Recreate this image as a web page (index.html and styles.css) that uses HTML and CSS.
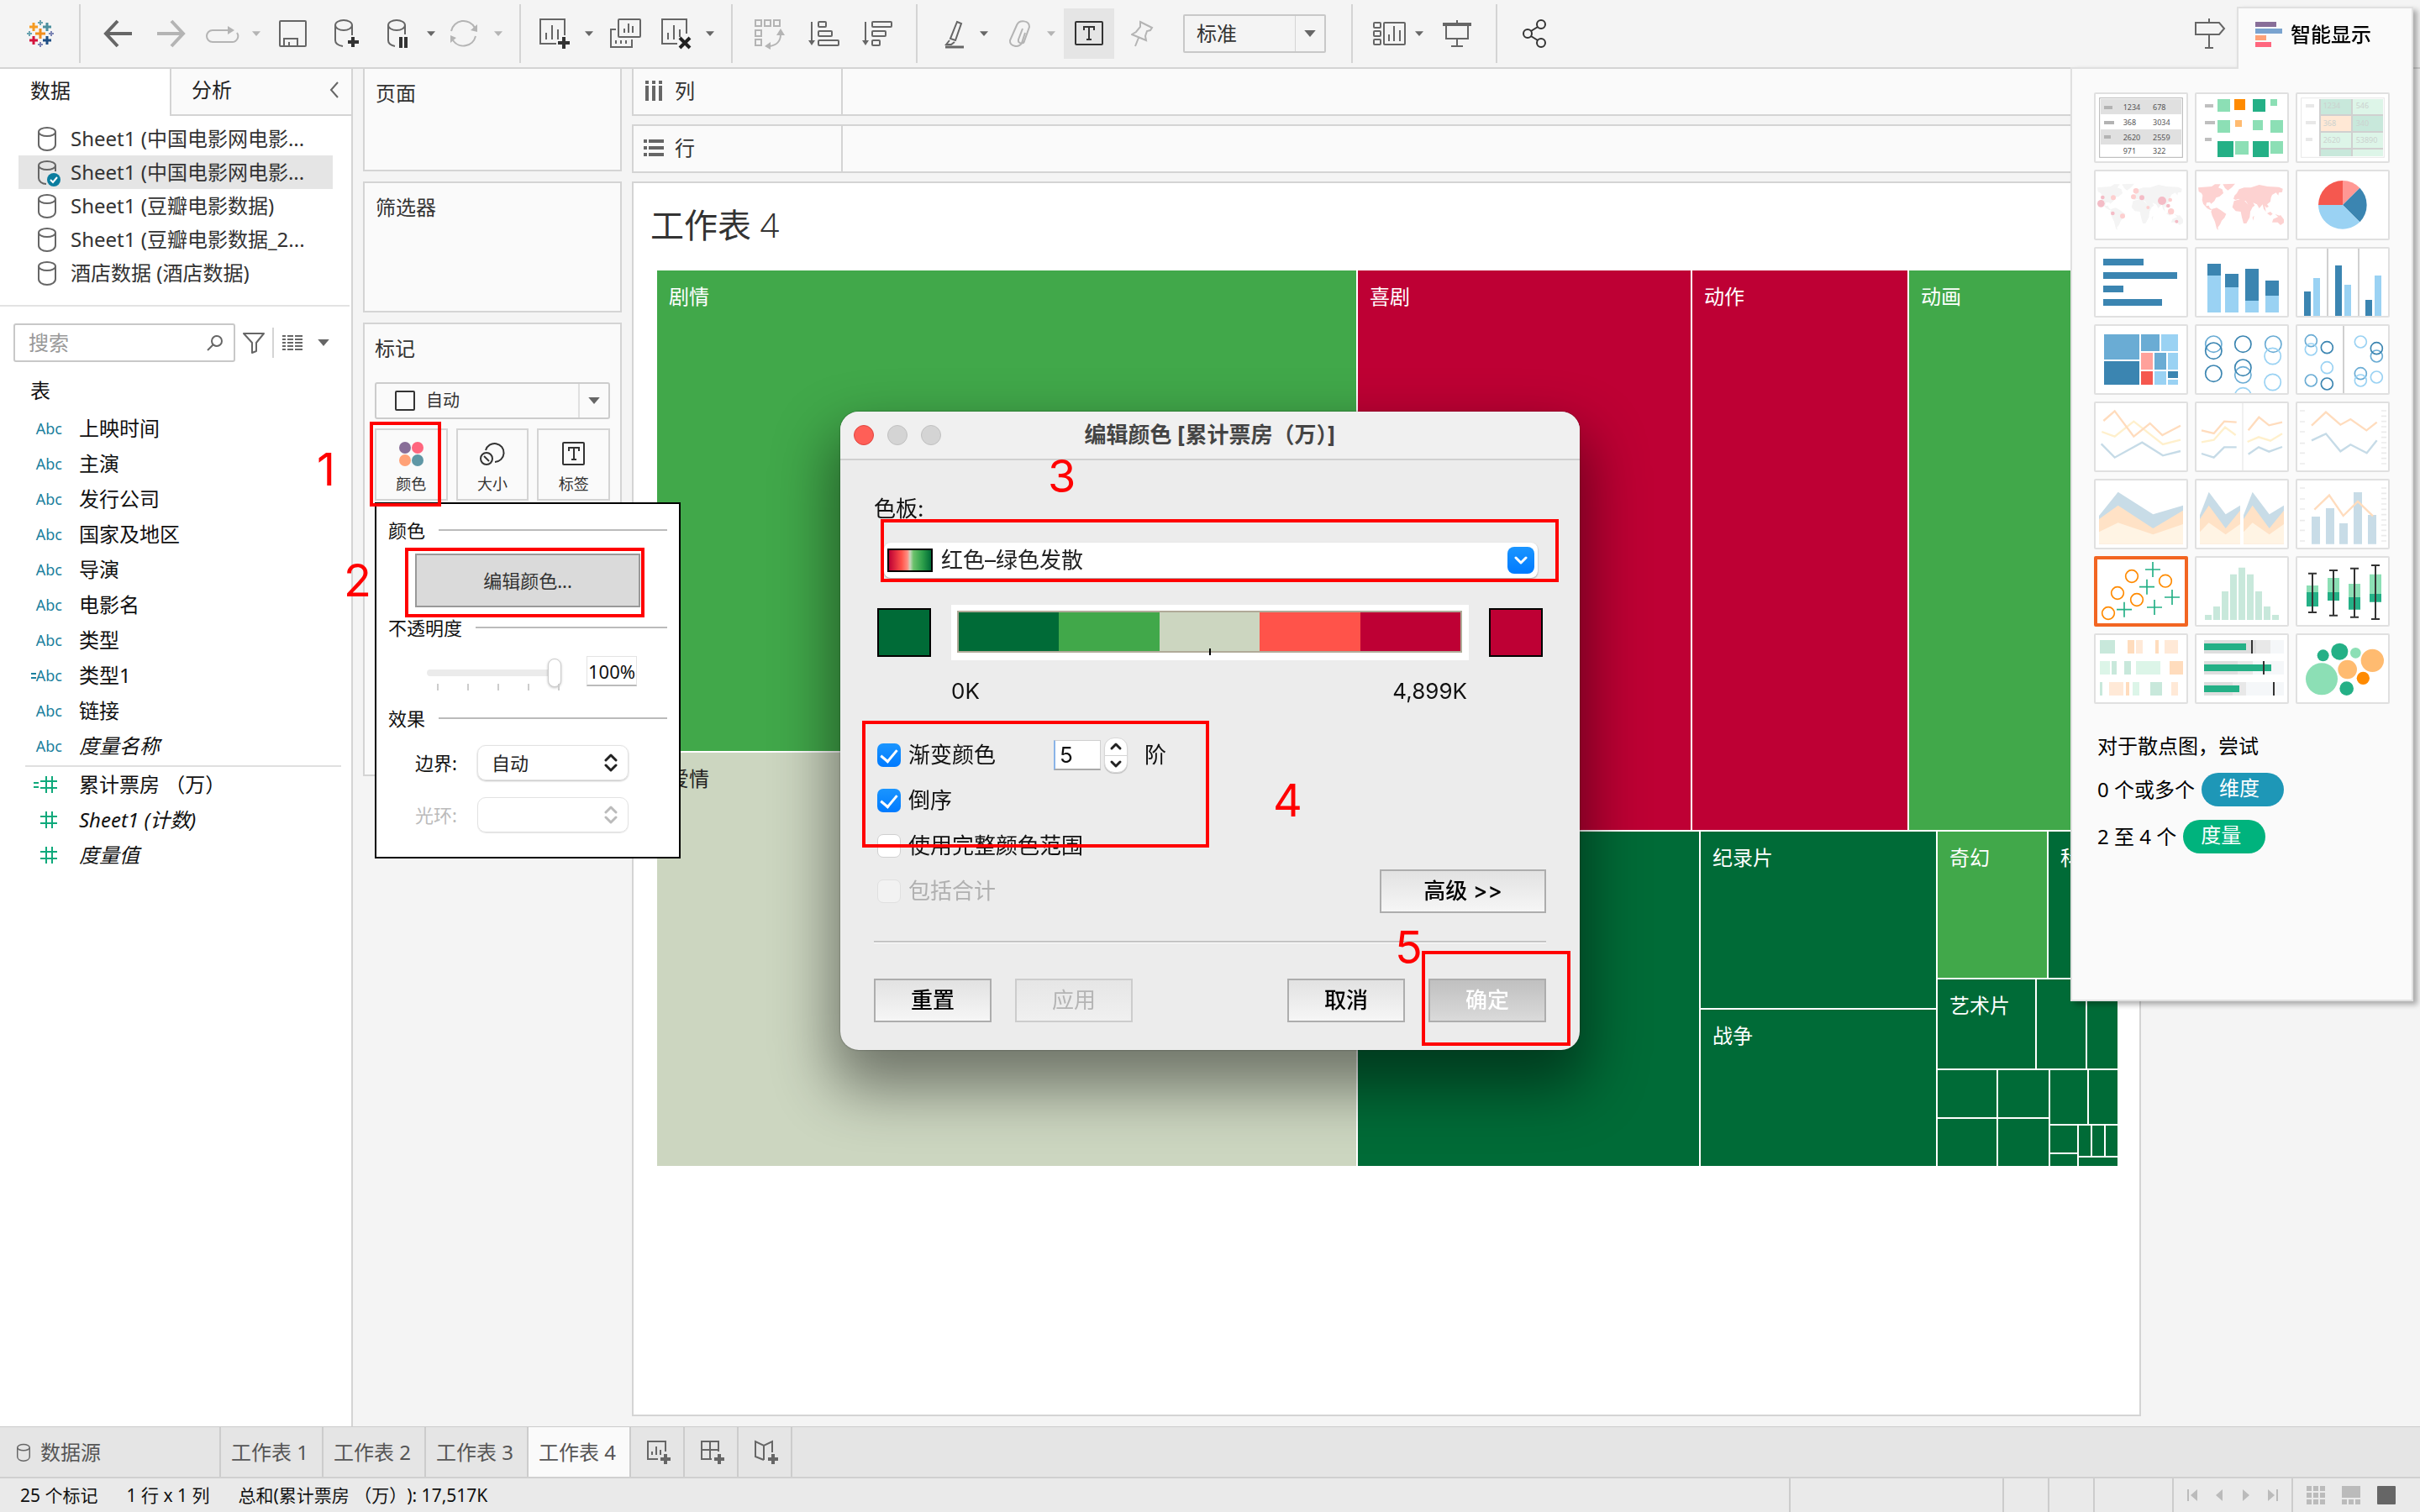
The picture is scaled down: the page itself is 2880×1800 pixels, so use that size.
FILE: index.html
```html
<!DOCTYPE html>
<html lang="zh-CN">
<head>
<meta charset="utf-8">
<meta name="viewport" content="width=device-width, initial-scale=1">
<title>工作表 4</title>
<link rel="stylesheet" href="styles.css">
</head>
<body>
<svg class="defs" aria-hidden="true">
  <symbol id="caret" viewBox="0 0 12 8"><path d="M0 0h12L6 7z" fill="currentColor"/></symbol>
  <symbol id="db" viewBox="0 0 22 30"><g fill="none" stroke="currentColor" stroke-width="2"><ellipse cx="11" cy="7" rx="10" ry="5"/><path d="M1 7v15c0 4 4 7 10 7s10-3 10-7V7"/></g></symbol>
  <symbol id="updown" viewBox="0 0 16 24"><path d="M2 9l6-6 6 6M2 15l6 6 6-6" fill="none" stroke="currentColor" stroke-width="3" stroke-linecap="round" stroke-linejoin="round"/></symbol>
  <symbol id="hash" viewBox="0 0 20 20"><path d="M7 0v20M14 0v20M0 6h20M0 14h20" stroke="currentColor" stroke-width="2" fill="none"/></symbol>
  <symbol id="world" viewBox="0 0 336 252"><path d="M12 64 30 62 60 60 72 52 92 52 84 64 98 70 102 84 88 96 76 100 70 112 58 122 54 116 42 118 40 130 50 128 54 138 62 142 56 144 44 138 30 122 26 108 28 92 24 84 14 78ZM100 52 144 50 132 64 118 74 108 66ZM62 140 78 136 92 144 112 158 106 172 96 182 90 196 82 206 84 216 78 210 72 186 62 164 58 150ZM142 92 150 84 158 70 176 64 200 64 230 54 260 60 300 62 314 68 312 80 300 82 298 92 290 82 276 90 272 100 270 114 258 124 264 132 256 136 250 128 254 150 246 140 242 124 230 138 222 124 208 118 214 128 200 138 190 124 182 112 170 110 156 104 146 108 138 104ZM140 112 160 106 178 112 194 128 206 134 198 150 196 170 184 192 174 192 168 170 164 150 146 148 134 134ZM276 188 280 176 294 170 306 162 318 178 318 190 306 198 296 188ZM258 156l12-6 8 8-8 6zM286 158l20 8-8 3zM206 170l6-6-4 18z"/></symbol>
  <symbol id="axis-ticks" viewBox="0 0 336 252"><path d="M15 33h18M15 72h18M15 108h18M15 149h18M15 184h18M15 222h18M306 33h18M306 52h18M306 71h18M306 90h18M306 109h18M306 128h18M306 147h18M306 165h18M306 184h18M306 203h18M306 222h18" stroke="#ebebeb" stroke-width="5"/></symbol>
</svg>

<header class="toolbar">
  <svg class="logo" viewBox="0 0 36 36" width="36" height="36" fill="none">
    <path d="M18 12v12M12 18h12" stroke="#f28e1c" stroke-width="3"/>
    <path d="M10 5v10M5 10h10" stroke="#f59b22" stroke-width="3"/>
    <path d="M26 5v10M21 10h10" stroke="#4b8f9e" stroke-width="3"/>
    <path d="M10 21v10M5 26h10" stroke="#d4133c" stroke-width="3"/>
    <path d="M26 21v10M21 26h10" stroke="#1f4f84" stroke-width="3"/>
    <path d="M18 2v6M15 5h6M5 15v6M2 18h6" stroke="#6ba3b0" stroke-width="2"/>
    <path d="M18 28v6M15 31h6M31 15v6M28 18h6" stroke="#7b84b4" stroke-width="2"/>
  </svg>
  <span class="sep"></span>
  <button class="tool" aria-label="后退"><svg width="36" height="36" viewBox="0 0 36 36"><path d="M18 3 4 18l14 15M4 18h31" fill="none" stroke="currentColor" stroke-width="4"/></svg></button>
  <button class="tool off" aria-label="前进"><svg width="36" height="36" viewBox="0 0 36 36"><path d="M18 3l14 15-14 15M32 18H1" fill="none" stroke="currentColor" stroke-width="4"/></svg></button>
  <button class="tool off" aria-label="重做"><svg width="42" height="24" viewBox="0 0 42 24"><path d="M28 8H9a7 7 0 0 0 0 14h23a7 7 0 0 0 6-11" fill="none" stroke="currentColor" stroke-width="2"/><path d="M27 3v10l8-5z" fill="currentColor"/></svg></button>
  <button class="tool off" aria-label="重做菜单"><svg class="caret"><use href="#caret"/></svg></button>
  <button class="tool" aria-label="保存"><svg width="34" height="34" viewBox="0 0 34 34" fill="none" stroke="currentColor" stroke-width="2"><rect x="1" y="2" width="31" height="30" rx="1"/><path d="M6 32v-9h16v9M12 32v-5"/></svg></button>
  <button class="tool" aria-label="新建数据源"><svg width="36" height="36" viewBox="0 0 36 36" fill="none" stroke="currentColor" stroke-width="2"><ellipse cx="13" cy="8" rx="10" ry="6"/><path d="M3 8v18c0 4 3 6 9 7M23 8v12"/><path d="M24 22v12M18 28h13" stroke="#333" stroke-width="4"/></svg></button>
  <button class="tool" aria-label="暂停自动更新"><svg width="30" height="36" viewBox="0 0 30 36" fill="none" stroke="currentColor" stroke-width="2"><ellipse cx="12" cy="8" rx="10" ry="6"/><path d="M2 8v18c0 4 3 6 8 7M22 8v11"/><path d="M17 22v13M23 22v13" stroke="#333" stroke-width="4"/></svg></button>
  <button class="tool" aria-label="更新菜单"><svg class="caret"><use href="#caret"/></svg></button>
  <button class="tool off" aria-label="刷新"><svg width="36" height="36" viewBox="0 0 36 36"><path d="M3 15A15 15 0 0 1 31 11M32 21A15 15 0 0 1 5 26" fill="none" stroke="currentColor" stroke-width="2"/><path d="M34 7v9l-8-2zM2 20v9l7-6z" fill="currentColor"/></svg></button>
  <button class="tool off" aria-label="刷新菜单"><svg class="caret"><use href="#caret"/></svg></button>
  <span class="sep"></span>
  <button class="tool" aria-label="新建工作表"><svg width="40" height="40" viewBox="0 0 40 40" fill="none" stroke="currentColor" stroke-width="2"><path d="M21 32H2V3h29v19M9 27v-8M16 27V10M23 27V15"/><path d="M30 24v14M23 31h14" stroke="#333" stroke-width="4"/></svg></button>
  <button class="tool" aria-label="新建菜单"><svg class="caret"><use href="#caret"/></svg></button>
  <button class="tool" aria-label="复制工作表"><svg width="38" height="38" viewBox="0 0 38 38" fill="none" stroke="currentColor" stroke-width="2"><rect x="10" y="2" width="26" height="21" rx="1"/><path d="M7 14H1v21h25v-9M17 18v-5M22 18V7M27 18v-8M7 31v-4M13 31v-4M19 31v-4"/></svg></button>
  <button class="tool" aria-label="清除工作表"><svg width="40" height="40" viewBox="0 0 40 40" fill="none" stroke="currentColor" stroke-width="2"><path d="M20 32H2V3h29v17M9 27v-8M16 27V10M23 24V15"/><path d="M23 25l12 12M35 25 23 37" stroke="#222" stroke-width="4"/></svg></button>
  <button class="tool" aria-label="清除菜单"><svg class="caret"><use href="#caret"/></svg></button>
  <span class="sep"></span>
  <button class="tool off" aria-label="交换行和列"><svg width="38" height="38" viewBox="0 0 38 38" fill="none" stroke="currentColor" stroke-width="2"><rect x="1" y="3" width="7" height="7"/><rect x="12" y="3" width="7" height="7"/><rect x="23" y="3" width="7" height="7"/><rect x="1" y="15" width="7" height="7"/><rect x="1" y="26" width="7" height="7"/><path d="M31 20c0 8-5 13-13 14"/><path d="M26 21l5-8 5 8zM19 29l-7 5 7 4z" fill="currentColor" stroke="none"/></svg></button>
  <button class="tool" aria-label="升序排序"><svg width="38" height="36" viewBox="0 0 38 36" fill="none" stroke="currentColor" stroke-width="2"><path d="M4 4v26"/><path d="M0 26h8l-4 6z" fill="currentColor" stroke="none"/><rect x="12" y="4" width="9" height="6" rx="1"/><rect x="12" y="15" width="16" height="6" rx="1"/><rect x="12" y="26" width="24" height="6" rx="1"/></svg></button>
  <button class="tool" aria-label="降序排序"><svg width="38" height="36" viewBox="0 0 38 36" fill="none" stroke="currentColor" stroke-width="2"><path d="M4 4v26"/><path d="M0 26h8l-4 6z" fill="currentColor" stroke="none"/><rect x="12" y="4" width="23" height="6" rx="1"/><rect x="12" y="15" width="16" height="6" rx="1"/><rect x="12" y="26" width="9" height="6" rx="1"/></svg></button>
  <span class="sep"></span>
  <button class="tool" aria-label="突出显示"><svg width="28" height="38" viewBox="0 0 28 38" fill="none" stroke="currentColor" stroke-width="2"><path d="M15 5l5 2-7 20-6-2zM6 27l-4 5h6l4-3"/><path d="M1 35h22" stroke-width="3"/></svg></button>
  <button class="tool" aria-label="突出显示菜单"><svg class="caret"><use href="#caret"/></svg></button>
  <button class="tool off" aria-label="组成员"><svg width="28" height="36" viewBox="0 0 28 36" fill="none" stroke="currentColor" stroke-width="2"><path d="M20 17l-4 12c-3 6-15 5-14-3L10 8c3-7 15-6 15 2l-6 17c-1 4-8 3-7-2l5-13"/></svg></button>
  <button class="tool off" aria-label="组菜单"><svg class="caret"><use href="#caret"/></svg></button>
  <button class="tool pressed" aria-label="显示标记标签"><svg width="36" height="30" viewBox="0 0 36 30" fill="none" stroke="#333" stroke-width="2"><rect x="2" y="1" width="32" height="27" rx="1"/><path d="M12 11V7h12v4M18 7v15M15 22h6"/></svg></button>
  <button class="tool off" aria-label="固定轴"><svg width="28" height="36" viewBox="0 0 28 36" fill="none" stroke="currentColor" stroke-width="2"><path d="M11 4l14 7-2 3-4 1-2 6 1 5-17-7 5-3 5-6zM9 23 5 33"/></svg></button>
  <span class="fit"><select aria-label="适合"><option>标准</option></select><svg class="caret big"><use href="#caret"/></svg></span>
  <span class="sep"></span>
  <button class="tool" aria-label="显示/隐藏卡"><svg width="40" height="32" viewBox="0 0 40 32" fill="none" stroke="currentColor" stroke-width="2"><rect x="1" y="3" width="8" height="6" rx="1"/><rect x="1" y="13" width="8" height="6" rx="1"/><rect x="1" y="23" width="8" height="6" rx="1"/><rect x="13" y="3" width="25" height="26" rx="1"/><path d="M19 25v-8M25 25V7M32 25V12"/></svg></button>
  <button class="tool" aria-label="卡菜单"><svg class="caret"><use href="#caret"/></svg></button>
  <button class="tool" aria-label="演示模式"><svg width="36" height="36" viewBox="0 0 36 36" fill="none" stroke="currentColor" stroke-width="2"><path d="M1 7h34" stroke-width="4"/><path d="M5 9v15h26V9M18 2v4M18 24v9M11 33h14"/></svg></button>
  <span class="sep"></span>
  <button class="tool" aria-label="共享"><svg width="32" height="36" viewBox="0 0 32 36" fill="none" stroke="#333" stroke-width="2"><circle cx="6" cy="18" r="5"/><circle cx="22" cy="7" r="5"/><circle cx="22" cy="29" r="5"/><path d="M10 15l8-5M10 21l8 5"/></svg></button>
  <button class="tool" aria-label="数据指南"><svg width="38" height="40" viewBox="0 0 38 40" fill="none" stroke="currentColor" stroke-width="2"><path d="M1 7h28l6 7-6 7H1zM17 2v5M17 21v16M12 37h10"/></svg></button>
</header>

<main class="workspace">
  <section class="data-pane">
    <div class="pane-tabs">
      <button class="pane-tab active">数据</button>
      <button class="pane-tab">分析<svg width="12" height="20" viewBox="0 0 12 20"><path d="M10 1 2 10l8 9" fill="none" stroke="#666" stroke-width="2"/></svg></button>
    </div>
    <ul class="sources">
      <li><svg class="db"><use href="#db"/></svg>Sheet1 (中国电影网电影...</li>
      <li class="selected"><svg class="db" viewBox="0 0 22 30"><g fill="none" stroke="#666" stroke-width="2"><ellipse cx="11" cy="7" rx="10" ry="5"/><path d="M21 7v7M1 7v15c0 4 4 7 9 7"/></g><circle cx="19" cy="24" r="8" fill="#0b7d9f"/><path d="M15 24l3 3 5-6" fill="none" stroke="#fff" stroke-width="2"/></svg>Sheet1 (中国电影网电影...</li>
      <li><svg class="db"><use href="#db"/></svg>Sheet1 (豆瓣电影数据)</li>
      <li><svg class="db"><use href="#db"/></svg>Sheet1 (豆瓣电影数据_2...</li>
      <li><svg class="db"><use href="#db"/></svg>酒店数据 (酒店数据)</li>
    </ul>
    <div class="search-row">
      <label class="search"><input type="text" placeholder="搜索" aria-label="搜索"><svg width="20" height="20" viewBox="0 0 20 20"><circle cx="12" cy="8" r="6" fill="none" stroke="#666" stroke-width="2"/><path d="M8 12l-7 7" stroke="#666" stroke-width="2"/></svg></label>
      <button class="icon-btn" aria-label="筛选"><svg width="28" height="26" viewBox="0 0 28 26"><path d="M2 2h24L17 13v10l-5 2V13z" fill="none" stroke="#666" stroke-width="2" stroke-linejoin="round"/></svg></button>
      <span class="sep short"></span>
      <button class="icon-btn view-btn" aria-label="视图"><svg width="24" height="20" viewBox="0 0 24 20"><path d="M0 2h24M0 6h24M0 10h24M0 14h24M0 18h24" stroke="#666" stroke-width="2"/><path d="M5 0v20M14 0v20" stroke="#fff" stroke-width="2"/></svg><svg class="caret big"><use href="#caret"/></svg></button>
    </div>
    <h2 class="table-name">表</h2>
    <ul class="fields">
      <li><span class="abc">Abc</span>上映时间</li>
      <li><span class="abc">Abc</span>主演</li>
      <li><span class="abc">Abc</span>发行公司</li>
      <li><span class="abc">Abc</span>国家及地区</li>
      <li><span class="abc">Abc</span>导演</li>
      <li><span class="abc">Abc</span>电影名</li>
      <li><span class="abc">Abc</span>类型</li>
      <li><span class="abc"><svg width="6" height="10" viewBox="0 0 6 10"><path d="M0 3h6M0 8h6" stroke="currentColor" stroke-width="2"/></svg>Abc</span>类型1</li>
      <li><span class="abc">Abc</span>链接</li>
      <li><span class="abc">Abc</span><i>度量名称</i></li>
    </ul>
    <ul class="fields measures">
      <li><span class="abc num"><svg width="8" height="10" viewBox="0 0 8 10"><path d="M0 3h6M0 8h6" stroke="currentColor" stroke-width="2"/></svg><svg width="20" height="20"><use href="#hash"/></svg></span>累计票房 （万）</li>
      <li><span class="abc num"><svg width="20" height="20"><use href="#hash"/></svg></span><i>Sheet1 (计数)</i></li>
      <li><span class="abc num"><svg width="20" height="20"><use href="#hash"/></svg></span><i>度量值</i></li>
    </ul>
  </section>

  <section class="cards">
    <div class="card pages">页面</div>
    <div class="card filters">筛选器</div>
    <div class="card marks">
      <h2>标记</h2>
      <div class="mark-type"><svg width="26" height="26" viewBox="0 0 26 26"><rect x="2" y="2" width="22" height="22" rx="1" fill="none" stroke="#333" stroke-width="2"/></svg><select aria-label="标记类型"><option>自动</option></select><span class="drop"><svg class="caret big"><use href="#caret"/></svg></span></div>
      <div class="mark-buttons">
        <button><svg width="32" height="32" viewBox="0 0 32 32"><circle cx="9" cy="9" r="7" fill="#886e98"/><circle cx="24" cy="9" r="7" fill="#ff667e"/><circle cx="9" cy="24" r="7" fill="#ffa177"/><circle cx="24" cy="24" r="7" fill="#5f97a5"/></svg>颜色</button>
        <button><svg width="32" height="32" viewBox="0 0 32 32" fill="none" stroke="#333" stroke-width="2"><path d="M8 12a11 11 0 1 1 11 14"/><circle cx="9" cy="22" r="7"/><path d="M6 19l6 6"/></svg>大小</button>
        <button><svg width="32" height="32" viewBox="0 0 32 32" fill="none" stroke="#333" stroke-width="2"><rect x="3" y="3" width="25" height="26" rx="1"/><path d="M10 13V9h12v4M16 9v14M13 23h6"/></svg>标签</button>
      </div>
    </div>
  </section>

  <section class="canvas">
    <div class="shelf"><span class="shelf-name"><svg width="24" height="24" viewBox="0 0 24 24"><path d="M2 0h4v4H2zM10 0h4v4h-4zM18 0h4v4h-4zM2 6h4v18H2zM10 6h4v18h-4zM18 6h4v18h-4z" fill="#666"/></svg>列</span></div>
    <div class="shelf"><span class="shelf-name"><svg width="24" height="20" viewBox="0 0 24 20"><path d="M0 0h4v4H0zM0 8h4v4H0zM0 16h4v4H0zM6 0h18v4H6zM6 8h18v4H6zM6 16h18v4H6z" fill="#666"/></svg>行</span></div>
    <div class="view">
      <h1>工作表 <span class="thin">4</span></h1>
      <div class="treemap row">
        <div class="col" style="flex-grow:832">
          <div class="g2" style="flex-grow:572">剧情</div>
          <div class="g3" style="flex-grow:492">爱情</div>
        </div>
        <div class="col" style="flex-grow:904">
          <div class="row" style="flex-grow:666">
            <div class="r1" style="flex-grow:396">喜剧</div>
            <div class="r1" style="flex-grow:256">动作</div>
            <div class="g2" style="flex-grow:248">动画</div>
          </div>
          <div class="row" style="flex-grow:398">
            <div class="g1" style="flex-grow:406"></div>
            <div class="col" style="flex-grow:280">
              <div class="g1" style="flex-grow:210">纪录片</div>
              <div class="g1" style="flex-grow:186">战争</div>
            </div>
            <div class="col" style="flex-grow:214">
              <div class="row" style="flex-grow:174">
                <div class="g2" style="flex-grow:130">奇幻</div>
                <div class="g1" style="flex-grow:82">科幻</div>
              </div>
              <div class="row" style="flex-grow:106">
                <div class="g1" style="flex-grow:116">艺术片</div>
                <div class="g1" style="flex-grow:58"></div>
                <div class="g1" style="flex-grow:36"></div>
              </div>
              <div class="row" style="flex-grow:114">
                <div class="col" style="flex-grow:70"><div class="g1"></div><div class="g1"></div></div>
                <div class="col" style="flex-grow:60"><div class="g1"></div><div class="g1"></div></div>
                <div class="col" style="flex-grow:80">
                  <div class="row" style="flex-grow:64">
                    <div class="g1" style="flex-grow:44"></div>
                    <div class="g1" style="flex-grow:34"></div>
                  </div>
                  <div class="row" style="flex-grow:48">
                    <div class="col" style="flex-grow:32">
                      <div class="g1" style="flex-grow:32"></div>
                      <div class="g1" style="flex-grow:14"></div>
                    </div>
                    <div class="col" style="flex-grow:46">
                      <div class="row" style="flex-grow:36"><div class="g1"></div><div class="g1"></div><div class="g1"></div></div>
                      <div class="g1" style="flex-grow:10"></div>
                    </div>
                  </div>
                </div>
              </div>
            </div>
          </div>
        </div>
      </div>
    </div>
  </section>
</main>

<nav class="sheets">
  <a class="source" href="#"><svg width="16" height="22" viewBox="0 0 22 30"><use href="#db"/></svg>数据源</a>
  <a href="#">工作表 1</a>
  <a href="#">工作表 2</a>
  <a href="#">工作表 3</a>
  <a class="active" href="#">工作表 4</a>
  <button aria-label="新建工作表"><svg width="30" height="30" viewBox="0 0 30 30" fill="none" stroke="#666" stroke-width="2"><path d="M14 23H2V2h21v12M7 18v-4M12 18V8M17 18v-6"/><path d="M23 17v12M17 23h12" stroke-width="4"/></svg></button>
  <button aria-label="新建仪表板"><svg width="30" height="30" viewBox="0 0 30 30" fill="none" stroke="#666" stroke-width="2"><path d="M14 23H2V2h20v12M12 2v21M2 12h20"/><path d="M23 17v12M17 23h12" stroke-width="4"/></svg></button>
  <button aria-label="新建故事"><svg width="30" height="30" viewBox="0 0 30 30" fill="none" stroke="#666" stroke-width="2"><path d="M12 24 2 20V2l10 5 10-5v13M12 7v17"/><path d="M23 17v12M17 23h12" stroke-width="4"/></svg></button>
</nav>

<footer class="status">
  <span>25 个标记</span><span>1 行 x 1 列</span><span>总和(累计票房 （万）): 17,517K</span>
  <div class="status-right">
    <span class="cell"></span><span class="cell"></span><span class="cell"></span><span class="cell"></span>
    <span class="cell nav-icons">
      <svg width="12" height="14" viewBox="0 0 12 14"><path d="M0 0h2v14H0zM12 0v14L4 7z" fill="#bbb"/></svg>
      <svg width="12" height="14" viewBox="0 0 12 14"><path d="M10 0v14L2 7z" fill="#bbb"/></svg>
      <svg width="12" height="14" viewBox="0 0 12 14"><path d="M2 0v14l8-7z" fill="#bbb"/></svg>
      <svg width="12" height="14" viewBox="0 0 12 14"><path d="M10 0h2v14h-2zM0 0v14l8-7z" fill="#bbb"/></svg>
    </span>
    <span class="cell view-icons">
      <svg width="22" height="22" viewBox="0 0 22 22" fill="#bbb"><path d="M0 0h6v6H0zM8 0h6v6H8zM16 0h6v6h-6zM0 8h6v6H0zM8 8h6v6H8zM16 8h6v6h-6zM0 16h6v6H0zM8 16h6v6H8zM16 16h6v6h-6z"/></svg>
      <svg width="22" height="22" viewBox="0 0 22 22" fill="#bbb"><path d="M0 0h22v14H0zM0 16h6v6H0zM8 16h6v6H8zM16 16h6v6h-6z"/></svg>
      <svg width="22" height="22" viewBox="0 0 22 22"><rect width="22" height="22" rx="1" fill="#666"/></svg>
    </span>
  </div>
</footer>

<aside class="show-me">
  <button class="show-me-tab"><svg width="32" height="30" viewBox="0 0 32 30"><path d="M0 0h25v6H0z" fill="#886e98"/><path d="M0 8h32v6H0z" fill="#7aa3cf"/><path d="M0 16h13v6H0z" fill="#ffa177"/><path d="M0 24h19v6H0z" fill="#ff667e"/></svg>智能显示</button>
  <div class="show-me-body">
    <div class="thumbs">
      <button aria-label="文本表"><svg viewBox="6 6 324 240"><rect x="20" y="20" width="296" height="212" fill="none" stroke="#b3b3b3" stroke-width="3"/><path d="M24 24h288v54H24zM24 132h288v54H24z" fill="#e0e0e0"/><path d="M36 48h30v12H36zM36 102h36v12H36zM36 153h24v12H36z" fill="#b3b3b3"/><g class="thumb-text" fill="#555"><text x="104" y="62">1234</text><text x="210" y="62">678</text><text x="104" y="116">368</text><text x="210" y="116">3034</text><text x="104" y="170">2620</text><text x="210" y="170">2559</text><text x="104" y="218">971</text><text x="210" y="218">322</text></g></svg></button>
      <button aria-label="热图"><svg viewBox="6 6 324 240"><path d="M36 42h30v12H36zM36 102h36v12H36zM36 162h24v12H36z" fill="#bfbfbf"/><path d="M81 24h45v45H81zM270 24h24v24h-24zM81 99h45v45H81zM207 99h36v36h-36zM270 99h45v45h-45zM144 174h48v48h-48zM270 174h45v45h-45z" fill="#8cdfb5"/><path d="M207 24h45v45h-45zM81 174h57v57H81zM207 174h57v57h-57z" fill="#24b086"/><path d="M141 24h39v39h-39z" fill="#ff8a00"/><path d="M144 99h24v24h-24z" fill="#ffbb70"/></svg></button>
      <button aria-label="突出显示表"><svg viewBox="6 6 324 240"><rect x="20" y="20" width="296" height="212" fill="none" stroke="#e8e8e8" stroke-width="3"/><path d="M36 42h30v12H36zM36 102h36v12H36zM36 162h24v12H36z" fill="#e8e8e8"/><path d="M84 24h228v204H84z" fill="#d0d0d0"/><path d="M90 24h108v54H90zM204 84h108v54H204zM90 204h108v24H90z" fill="#c8e8db"/><path d="M204 24h108v54H204zM90 144h108v54H90zM204 144h108v54H204zM204 204h108v24H204z" fill="#ddf5e8"/><path d="M90 84h108v54H90z" fill="#ffe8d5"/><g class="thumb-text" fill="#ccd2cf"><text x="98" y="57">1234</text><text x="215" y="57">546</text><text x="98" y="120">368</text><text x="215" y="120">340</text><text x="98" y="180">2620</text><text x="215" y="180">53890</text></g></svg></button>

      <button aria-label="符号地图"><svg viewBox="6 6 324 240"><use href="#world" width="336" height="252" fill="#f4f4f4"/><g fill="#fdcfcf"><circle cx="150" cy="76" r="10"/><circle cx="141" cy="97" r="9"/><circle cx="69" cy="100" r="9"/><circle cx="272" cy="108" r="7"/><circle cx="275" cy="149" r="11"/><circle cx="193" cy="135" r="6"/><circle cx="102" cy="166" r="9"/></g><g fill="#f4bcc6"><circle cx="171" cy="100" r="9"/><circle cx="31" cy="99" r="7"/><circle cx="25" cy="121" r="13"/><circle cx="243" cy="111" r="15"/><circle cx="265" cy="129" r="7"/><circle cx="67" cy="156" r="7"/><circle cx="295" cy="185" r="6"/></g></svg></button>
      <button aria-label="地图"><svg viewBox="6 6 324 240"><use href="#world" width="336" height="252" fill="#fdd2d1"/></svg></button>
      <button aria-label="饼图"><svg viewBox="6 6 324 240"><path d="M168 126H81a87 87 0 0 1 87-87z" fill="#f5584f"/><path d="M168 126V39a87 87 0 0 1 61 26z" fill="#ff9894"/><path d="M168 126l61-61a87 87 0 0 1 0 122z" fill="#3b85b1"/><path d="M168 126l61 61A87 87 0 0 1 81 126z" fill="#9ad2f3"/></svg></button>

      <button aria-label="水平条"><svg viewBox="6 6 324 240"><path d="M33 42h144v24H33zM33 90h264v24H33zM33 138h72v24H33zM33 186h210v24H33z" fill="#3b85b1"/></svg></button>
      <button aria-label="堆叠条"><svg viewBox="6 6 324 240"><path d="M45 60h48v42H45zM108 96h48v48h-48zM180 78h48v114h-48zM252 120h48v54h-48z" fill="#3b85b1"/><path d="M45 102h48v132H45zM108 144h48v90h-48zM180 192h48v42h-48zM252 174h48v60h-48z" fill="#9ad2f3"/></svg></button>
      <button aria-label="并排条"><svg viewBox="6 6 324 240"><path d="M111 0h6v252h-6zM222 0h6v252h-6z" fill="#d0d0d0"/><path d="M30 159h24v87H30zM141 66h24v180h-24zM249 189h24v57h-24z" fill="#3b85b1"/><path d="M63 111h24v135H63zM174 135h24v111h-24zM282 102h24v144h-24z" fill="#9ad2f3"/></svg></button>

      <button aria-label="树状图"><svg viewBox="6 6 324 240"><path d="M36 36h126v90H36zM168 36h66v60h-66zM216 102h42v60h-42z" fill="#6aacd4"/><path d="M36 132h126v84H36zM264 168h36v24h-36z" fill="#3b85b1"/><path d="M240 36h60v60h-60zM264 102h36v60h-36zM216 168h42v48h-42zM264 198h36v18h-36z" fill="#9ad2f3"/><path d="M168 102h42v60h-42z" fill="#ffa19b"/><path d="M168 168h42v48h-42z" fill="#f5584f"/></svg></button>
      <button aria-label="圆视图"><svg viewBox="6 6 324 240" fill="none" stroke-width="5"><g stroke="#6aacd4"><circle cx="67" cy="71" r="29"/><circle cx="172" cy="181" r="29"/><circle cx="280" cy="71" r="29"/></g><g stroke="#3b85b1"><circle cx="67" cy="95" r="29"/><circle cx="67" cy="176" r="29"/><circle cx="172" cy="71" r="29"/><circle cx="172" cy="155" r="29"/></g><g stroke="#9ad2f3"><circle cx="172" cy="256" r="29"/><circle cx="278" cy="114" r="29"/><circle cx="278" cy="207" r="29"/></g></svg></button>
      <button aria-label="并排圆"><svg viewBox="6 6 324 240" fill="none" stroke-width="5"><path d="M171 0v252" stroke="#d0d0d0" stroke-width="6"/><g stroke="#6aacd4"><circle cx="55" cy="59" r="21"/><circle cx="55" cy="201" r="21"/><circle cx="289" cy="114" r="21"/><circle cx="232" cy="176" r="21"/></g><g stroke="#3b85b1"><circle cx="112" cy="83" r="21"/><circle cx="112" cy="213" r="21"/><circle cx="289" cy="86" r="21"/></g><g stroke="#9ad2f3"><circle cx="55" cy="90" r="21"/><circle cx="112" cy="155" r="21"/><circle cx="232" cy="63" r="21"/><circle cx="232" cy="201" r="21"/><circle cx="289" cy="189" r="21"/></g></svg></button>

      <button aria-label="连续线"><svg viewBox="6 6 324 240" fill="none" stroke-width="7"><path d="M28 108 74 125 142 71 246 153 309 137" stroke="#fff0cc"/><path d="M34 69 74 34 142 125 200 78 244 120 309 86" stroke="#ffdcbd"/><path d="M26 151 74 200 172 146 246 193 309 177" stroke="#c6dbe7"/></svg></button>
      <button aria-label="离散线"><svg viewBox="6 6 324 240" fill="none" stroke-width="7"><path d="M171 0v252" stroke="#f0f0f0" stroke-width="6"/><path d="M24 145 68 137 108 92 146 120M188 144 228 127 270 140 312 115" stroke="#fff0cc"/><path d="M24 103 68 114 105 71 149 74M191 103 229 56 265 85 312 74" stroke="#ffdcbd"/><path d="M24 186 68 200 105 163 149 163M191 188 228 163 265 179 312 162" stroke="#c6dbe7"/></svg></button>
      <button aria-label="双线"><svg viewBox="6 6 324 240" fill="none" stroke-width="7"><use href="#axis-ticks" width="336" height="252"/><path d="M57 86 108 38 160 83 196 63 253 103 290 74" stroke="#ffdcbd"/><path d="M57 139 108 115 160 178 196 154 254 184 290 139" stroke="#c6dbe7"/></svg></button>

      <button aria-label="连续面积图"><svg viewBox="6 6 324 240"><path d="M18 132 86 47 211 127 318 95V233H18z" fill="#c8dce7"/><path d="M18 144 86 95 211 177 318 113V233H18z" fill="#ffe2c6"/><path d="M18 190 86 157 211 199 318 162V233H18z" fill="#fff4e4"/></svg></button>
      <button aria-label="离散面积图"><svg viewBox="6 6 324 240"><path d="M18 130 50 47 110 127 162 95V233H18zM174 130 206 47 266 127 318 95V233H174z" fill="#c8dce7"/><path d="M18 144 50 95 110 177 162 113V233H18zM174 144 206 95 266 177 318 113V233H174z" fill="#ffe2c6"/><path d="M18 190 50 157 110 199 162 162V233H18zM174 190 206 157 266 199 318 162V233H174z" fill="#fff4e4"/></svg></button>
      <button aria-label="双组合"><svg viewBox="6 6 324 240"><use href="#axis-ticks" width="336" height="252"/><path d="M57 135h30v98H57zM108 105h30v128h-30zM156 159h30v74h-30zM207 48h30v185h-30zM258 129h30v104h-30z" fill="#c8dce7"/><path d="M67 110 120 59 170 132 222 81 276 133" fill="none" stroke="#ffdcbd" stroke-width="7"/></svg></button>

      <button class="chosen" aria-label="散点图"><svg viewBox="12 12 312 228" fill="none" stroke-width="5"><g stroke="#ff8a00"><circle cx="135" cy="72" r="22"/><circle cx="255" cy="89" r="22"/><circle cx="84" cy="132" r="22"/><circle cx="153" cy="156" r="22"/><circle cx="51" cy="204" r="22"/></g><path d="M183 48h54M210 21v54M162 110h54M189 83v54M252 147h54M279 120v54M81 191h54M108 164v54M189 183h54M216 156v54" stroke="#24b086"/></svg></button>
      <button aria-label="直方图"><svg viewBox="6 6 324 240"><path d="M36 210h24v18H36zM66 180h24v48H66zM96 126h24v102H96zM126 65h24v163h-24zM156 41h24v187h-24zM186 65h24v163h-24zM216 126h24v102h-24zM246 180h24v48h-24zM276 210h24v18h-24z" fill="#c8e8db"/></svg></button>
      <button aria-label="盒须图"><svg viewBox="6 6 324 240"><path d="M39 105h42v24H39zM114 78h42v51h-42zM189 99h42v48h-42zM264 65h42v70h-42z" fill="#8cdfb5"/><path d="M39 129h42v51H39zM114 129h42v30h-42zM189 147h42v44h-42zM264 135h42v29h-42z" fill="#24b086"/><path d="M60 62v139M45 62h30M45 201h30M135 51v161M120 51h30M120 212h30M210 44v174M195 44h30M195 218h30M285 33v192M270 33h30M270 225h30" stroke="#333" stroke-width="6"/></svg></button>

      <button aria-label="甘特图"><svg viewBox="6 6 324 240"><path d="M21 24h54v48H21zM63 99h18v48H63zM108 99h24v48h-24zM21 174h9v48h-9zM201 174h42v48h-42z" fill="#c8e8db"/><path d="M120 24h24v48h-24zM219 24h12v48h-12zM270 99h48v48h-48zM114 174h12v48h-12z" fill="#ffdcbd"/><path d="M150 24h24v48h-24zM252 24h48v48h-48zM54 174h51v48H54zM276 174h24v48h-24z" fill="#ffe9d7"/><path d="M21 99h36v48H21zM150 99h87v48h-87zM138 174h24v48h-24z" fill="#dcf5e8"/></svg></button>
      <button aria-label="靶心图"><svg viewBox="6 6 324 240"><path d="M33 24h285v48H33zM33 99h285v48H33zM33 174h285v48H33z" fill="#f5f7f9"/><path d="M33 24h237v48H33zM33 99h174v48H33zM33 174h150v48H33z" fill="#e8e8e8"/><path d="M33 24h186v48H33zM33 99h120v48H33zM33 174h102v48H33z" fill="#dedede"/><path d="M33 36h150v24H33zM33 111h240v24H33zM33 186h126v24H33z" fill="#24b086"/><path d="M201 24h6v48h-6zM243 99h6v48h-6zM279 174h6v48h-6z" fill="#333"/></svg></button>
      <button aria-label="填充气泡图"><svg viewBox="6 6 324 240"><g fill="#8cdfb5"><circle cx="93" cy="163" r="57"/><circle cx="214" cy="70" r="19"/></g><g fill="#24b086"><circle cx="98" cy="79" r="21"/><circle cx="157" cy="65" r="30"/><circle cx="182" cy="197" r="25"/></g><g fill="#ffbb70"><circle cx="274" cy="97" r="41"/><circle cx="185" cy="129" r="34"/></g><circle cx="241" cy="160" r="23" fill="#ff8a00"/></svg></button>
    </div>
    <p class="hint">对于散点图，尝试</p>
    <p class="hint">0 个或多个 <span class="pill dim">维度</span></p>
    <p class="hint">2 至 4 个 <span class="pill mea">度量</span></p>
  </div>
</aside>

<section class="color-menu" aria-label="颜色">
  <h3>颜色</h3>
  <button class="edit-colors">编辑颜色...</button>
  <h3>不透明度</h3>
  <div class="opacity">
    <div class="slider"><input type="range" min="0" max="100" value="100" aria-label="不透明度"><div class="ticks"><i></i><i></i><i></i><i></i><i></i></div></div>
    <input class="percent" type="text" value="100%" aria-label="不透明度百分比">
  </div>
  <h3>效果</h3>
  <div class="effect"><label for="border">边界:</label><span class="mac-select"><select id="border"><option>自动</option></select><svg width="16" height="24"><use href="#updown"/></svg></span></div>
  <div class="effect disabled"><label for="halo">光环:</label><span class="mac-select"><select id="halo" disabled><option></option></select><svg width="16" height="24"><use href="#updown"/></svg></span></div>
</section>

<div class="dialog-layer">
  <section class="dialog" role="dialog" aria-labelledby="dialog-title">
    <header class="titlebar">
      <span class="lights"><i class="close"></i><i></i><i></i></span>
      <h2 id="dialog-title">编辑颜色 [累计票房（万）]</h2>
    </header>
    <div class="dialog-body">
      <label for="palette">色板:</label>
      <div class="palette">
        <span class="ramp"></span>
        <select id="palette"><option>红色–绿色发散</option></select>
        <span class="blue-drop"><svg width="16" height="12" viewBox="0 0 16 12"><path d="M2 3l6 6 6-6" fill="none" stroke="#fff" stroke-width="3" stroke-linecap="round" stroke-linejoin="round"/></svg></span>
      </div>
      <div class="range">
        <button class="swatch low" aria-label="起始颜色"></button>
        <div class="steps"><div class="bar"><i class="g1"></i><i class="g2"></i><i class="g3"></i><i class="r2"></i><i class="r1"></i></div></div>
        <button class="swatch high" aria-label="结束颜色"></button>
      </div>
      <div class="range-labels"><span>0K</span><span>4,899K</span></div>
      <div class="options">
        <div class="option"><label class="check stepped"><input type="checkbox" checked>渐变颜色</label><input class="count" id="steps" type="text" value="5"><span class="stepper"><button aria-label="增加"><svg width="16" height="12" viewBox="0 0 16 12"><path d="M3 8l5-5 5 5" fill="none" stroke="#222" stroke-width="3" stroke-linecap="round" stroke-linejoin="round"/></svg></button><button aria-label="减少"><svg width="16" height="12" viewBox="0 0 16 12"><path d="M3 4l5 5 5-5" fill="none" stroke="#222" stroke-width="3" stroke-linecap="round" stroke-linejoin="round"/></svg></button></span><label for="steps">阶</label></div>
        <div class="option"><label class="check"><input type="checkbox" checked>倒序</label></div>
        <div class="option"><label class="check"><input type="checkbox">使用完整颜色范围</label></div>
        <div class="option"><label class="check off"><input type="checkbox" disabled>包括合计</label><button class="btn advanced">高级 &gt;&gt;</button></div>
      </div>
      <div class="actions">
        <button class="btn">重置</button><button class="btn" disabled>应用</button>
        <span class="spring"></span>
        <button class="btn">取消</button><button class="btn default">确定</button>
      </div>
    </div>
  </section>
</div>

<div class="notes" aria-hidden="true">
  <span class="box b1"></span><span class="box b2"></span><span class="box b3"></span><span class="box b4"></span><span class="box b5"></span>
  <span class="digit d1">1</span><span class="digit d2">2</span><span class="digit d3">3</span><span class="digit d4">4</span><span class="digit d5">5</span>
</div>
</body>
</html>
```
FILE: styles.css
```css
* { box-sizing: border-box; }

:root {
  --line: #d4d4d4;
  --g1: #006b37;
  --g2: #41a84a;
  --g3: #ccd6c0;
  --r2: #ff534a;
  --r1: #be0034;
}

body {
  margin: 0;
  min-height: 100vh;
  display: flex;
  flex-direction: column;
  position: relative;
  background: #f4f4f4;
  color: #333;
  font: 24px/36px "Noto Sans", "Noto Sans CJK SC", sans-serif;
}

h1, h2, h3, p, ul { margin: 0; padding: 0; font-weight: 400; font-size: inherit; }
ul { list-style: none; }
a { color: inherit; text-decoration: none; }
svg { display: block; flex: none; }
button, input, select { font: inherit; color: inherit; margin: 0; padding: 0; border: 0; background: none; border-radius: 0; }
select { appearance: none; outline: 0; }
.defs { position: absolute; width: 0; height: 0; }
.caret { width: 10px; height: 7px; }
.caret.big { width: 14px; height: 9px; color: #666; }

.g1 { background: var(--g1); }
.g2 { background: var(--g2); }
.g3 { background: var(--g3); }
.r2 { background: var(--r2); }
.r1 { background: var(--r1); }

/* toolbar */
.toolbar {
  display: grid;
  grid-template-columns:
    64px 28px 64px 58px 56px 32px 64px 64px 48px 26px 54px 30px 23px
    55px 30px 60px 54px 30px 28px 64px 64px 64px 34px
    42px 34px 46px 20px 80px 62px 200px 26px
    50px 32px 64px 32px 1fr 268px;
  align-items: center;
  padding-left: 30px;
  height: 80px;
}
.tool { display: flex; justify-content: flex-start; color: #666; }
.tool.off { color: #b4b4b4; }
.tool.pressed { width: 60px; height: 60px; background: #e5e5e5; align-items: center; justify-content: center; }
.sep { width: 2px; height: 70px; background: var(--line); }
.sep.short { height: 36px; }
.fit {
  display: flex;
  align-items: center;
  width: 170px;
  height: 46px;
  border: 2px solid #c8c8c8;
  border-radius: 2px;
}
.fit select { width: 132px; height: 42px; padding-left: 14px; border-right: 1px solid #d4d4d4; margin-right: 10px; }

/* main area */
.workspace { flex: 1; display: flex; border-top: 2px solid var(--line); }

.data-pane { width: 420px; background: #fff; border-right: 2px solid var(--line); }
.pane-tabs { display: flex; }
.pane-tab { width: 202px; height: 56px; padding: 0 14px 4px 36px; text-align: left; color: #222; }
.pane-tab + .pane-tab {
  flex: 1;
  display: flex;
  align-items: center;
  justify-content: space-between;
  padding-left: 24px;
  background: #fafafa;
  border-left: 2px solid var(--line);
  border-bottom: 2px solid var(--line);
}
.sources { padding: 7px 22px 18px; border-bottom: 2px solid #e3e3e3; margin-right: 2px; }
.sources li { display: flex; align-items: center; gap: 17px; height: 40px; padding-left: 23px; white-space: nowrap; }
.sources .selected { background: #e5e5e5; margin-right: -2px; }
.db { width: 22px; height: 30px; color: #666; overflow: visible; }

.search-row { display: flex; align-items: center; padding: 20px 0 0 16px; gap: 8px; }
.search { display: flex; align-items: center; width: 264px; height: 46px; padding: 0 12px 0 16px; border: 2px solid #c8c8c8; border-radius: 3px; }
.search input { flex: 1; min-width: 0; outline: 0; }
.search input::placeholder { color: #999; opacity: 1; }
.icon-btn { display: flex; align-items: center; gap: 18px; }
.view-btn { margin-left: 2px; }
.table-name { padding: 16px 0 10px 36px; color: #111; }
.fields { margin: 0 12px 0 30px; color: #111; }
.fields li { display: flex; align-items: center; height: 42px; white-space: nowrap; }
.abc { width: 44px; margin-right: 20px; display: flex; align-items: center; justify-content: flex-end; color: #1b7f9e; font-size: 18px; }
.abc.num { color: #0fa97b; width: 38px; margin-right: 26px; }
.table-name + .fields { margin-top: -4px; border-bottom: 2px solid #e0e0e0; padding-bottom: 2px; }

.cards { display: flex; flex-direction: column; gap: 12px; width: 332px; padding: 0 12px; margin-top: -2px; }
.card { border: 2px solid var(--line); background: #fafafa; padding: 11px 12px 0 13px; }
.pages { height: 124px; }
.filters { height: 156px; }
.marks { height: 540px; padding-right: 12px; padding-left: 12px; }
.mark-type { display: flex; align-items: center; margin-top: 22px; height: 44px; border: 2px solid #ccc; border-radius: 3px; padding-left: 21px; gap: 12px; font-size: 20px; }
.mark-type select { flex: 1; height: 40px; }
.drop { display: flex; align-items: center; padding: 0 10px; height: 40px; border-left: 2px solid #e0e0e0; }
.mark-buttons { display: grid; grid-template-columns: repeat(3, 1fr); gap: 10px; margin-top: 11px; }
.mark-buttons button { display: flex; flex-direction: column; align-items: center; height: 86px; padding-top: 12px; border: 2px solid var(--line); font-size: 18px; line-height: 24px; gap: 8px; }

.canvas { flex: 1; display: flex; flex-direction: column; gap: 10px; margin: -2px 332px 12px 0; min-width: 0; }
.shelf { height: 58px; border: 2px solid var(--line); background: #fafafa; }
.shelf-name { display: flex; align-items: center; gap: 13px; width: 249px; height: 54px; padding: 0 0 2px 12px; border-right: 2px solid var(--line); }
.view { flex: 1; border: 2px solid var(--line); background: #fff; padding: 20px 26px 0 28px; }
.view h1 { font-size: 40px; line-height: 60px; margin: 0 0 24px -8px; }
.thin { font-weight: 300; }

.row, .col { display: flex; gap: 2px; }
.col { flex-direction: column; }
.treemap { height: 1066px; color: #fff; }
.treemap div { flex: 1 1 0; min-width: 0; min-height: 0; }
.treemap [class^="g"], .treemap .r1 { overflow: hidden; white-space: nowrap; text-indent: 14px; line-height: 62px; }
.treemap .g3 { color: #222; }

/* sheet tabs and status bar */
.sheets { display: flex; height: 62px; background: #e5e5e5; border-top: 1px solid #ccc; border-bottom: 2px solid #d0d0d0; color: #555; }
.sheets a, .sheets button { display: flex; align-items: center; width: 122px; padding-left: 12px; border-right: 2px solid #ccc; white-space: nowrap; }
.sheets button { width: 64px; padding-left: 18px; }
.sheets .source { width: 263px; padding-left: 20px; gap: 12px; }
.sheets .source svg { color: #666; }
.sheets .active { background: #fafafa; }
.status { display: flex; align-items: center; gap: 34px; height: 40px; padding-left: 24px; background: #eaeaea; color: #111; font-size: 21px; text-spacing-trim: space-all; }
.status-right { display: flex; margin-left: auto; height: 40px; }
.cell { border-left: 2px solid #ccc; width: 54px; display: flex; align-items: center; }
.cell:first-child { width: 254px; }
.cell:nth-child(4) { width: 94px; }
.status-right .nav-icons { width: 142px; padding-left: 16px; gap: 20px; }
.status-right .view-icons { width: 153px; padding-left: 16px; gap: 20px; }

/* show me */
.show-me { position: absolute; top: 8px; right: 8px; width: 408px; display: flex; flex-direction: column; filter: drop-shadow(5px 4px 3px rgba(0, 0, 0, .3)); color: #000; }
.show-me-tab { position: relative; z-index: 1; align-self: flex-end; display: flex; align-items: center; gap: 10px; width: 210px; height: 74px; padding: 0 0 10px 20px; margin-bottom: -2px; background: #fafafa; border: 2px solid #e0e0e0; border-bottom: 0; font-weight: 500; color: #000; }
.show-me-body { height: 1112px; background: #fafafa; border: 2px solid #e0e0e0; padding: 28px 26px; }
.thumbs { display: grid; grid-template-columns: repeat(3, 112px); gap: 8px; margin-bottom: 30px; }
.thumbs button { height: 84px; border: 2px solid #e0e0e0; border-radius: 2px; background: #fff; }
.thumbs svg { width: 100%; height: 100%; }
.thumbs .chosen { border: 4px solid #f26522; }
.thumb-text { font-size: 27px; }
.hint { display: flex; align-items: center; gap: 8px; height: 40px; margin: 0 0 0 4px; }
.hint + .hint { margin-top: 12px; }
.hint + .hint + .hint { margin-top: 16px; }
.pill { width: 98px; height: 40px; padding-left: 21px; border-radius: 20px; color: #fff; }
.dim { background: #1e97b7; }
.mea { background: #00b37d; }

/* colour menu */
.color-menu { position: absolute; left: 446px; top: 598px; width: 364px; height: 424px; padding: 15px 14px; border: 2px solid #000; background: #fff; color: #111; font-size: 22px; line-height: 32px; }
.color-menu h3 { display: flex; align-items: center; gap: 16px; }
.color-menu h3::after { content: ""; flex: 1; height: 2px; background: #bbb; }
.edit-colors { display: block; width: 268px; height: 64px; margin: 12px 0 8px 32px; border: 2px solid #999; background: #dadada; color: #333; }
.opacity { display: flex; align-items: center; height: 76px; padding: 0 36px 4px 46px; justify-content: space-between; }
.slider { width: 160px; padding-top: 8px; }
.slider input { display: block; appearance: none; width: 160px; height: 34px; }
.slider input::-webkit-slider-runnable-track { height: 8px; border-radius: 4px; background: #ebebeb; }
.slider input::-webkit-slider-thumb { appearance: none; width: 16px; height: 34px; margin-top: -13px; border-radius: 8px; background: #fff; border: 1px solid #ccc; box-shadow: 0 1px 3px rgba(0, 0, 0, .25); }
.ticks { display: flex; justify-content: space-between; margin: -4px 2px 0 12px; }
.ticks i { width: 2px; height: 8px; background: #ccc; }
.percent { width: 60px; height: 36px; border: 1px solid #e4e4e4; border-bottom: 2px solid #bbb; text-align: center; }
.effect { display: flex; align-items: center; gap: 24px; height: 42px; margin: 16px 0 0 32px; }
.effect + .effect { margin-top: 20px; }
.mac-select { display: flex; align-items: center; width: 180px; height: 42px; padding: 0 12px 0 16px; border-radius: 10px; border: 1px solid #e2e2e2; box-shadow: 0 1px 2px rgba(0, 0, 0, .25); color: #222; }
.mac-select select { flex: 1; height: 40px; }
.disabled, .disabled .mac-select { color: #bbb; }
.disabled .mac-select { box-shadow: 0 1px 1px rgba(0, 0, 0, .1); }

/* dialog */
.dialog-layer { position: absolute; inset: 490px 0 auto; display: flex; justify-content: center; pointer-events: none; }
.dialog { width: 880px; border-radius: 22px; overflow: hidden; background: #ececec; box-shadow: 0 0 2px rgba(0, 0, 0, .5), 0 36px 70px 10px rgba(0, 0, 0, .45); pointer-events: auto; font: 26px/40px Inter, "Noto Sans CJK SC", sans-serif; color: #111; }
.titlebar { position: relative; height: 58px; padding-top: 8px; background: #f0f0f0; border-bottom: 2px solid #d0d0d0; text-align: center; color: #444; }
.titlebar h2 { font-weight: 700; line-height: 40px; }
.lights { position: absolute; left: 16px; top: 16px; display: flex; gap: 16px; }
.lights i { width: 24px; height: 24px; border-radius: 50%; background: #d4d4d4; border: 1px solid #c0c0c0; }
.lights .close { background: #ff5f57; border-color: #e0443e; }
.dialog-body { padding: 38px 40px 33px; }
.palette { display: flex; align-items: center; height: 42px; margin: 20px 10px 0 12px; padding: 0 4px; background: #fff; border-radius: 8px; box-shadow: 0 1px 2px rgba(0, 0, 0, .35); color: #222; }
.ramp { width: 54px; height: 28px; border: 2px solid #000; background: linear-gradient(90deg, #be0034, #ff534a 30%, #ff8f82 44%, #ccd6c0 50%, #6cc26c 58%, #2d9f4a 80%, #006b37); }
.palette select { flex: 1; height: 42px; padding-left: 10px; }
.blue-drop { display: grid; place-items: center; width: 32px; height: 32px; border-radius: 8px; background: linear-gradient(#1a95ff, #007aff); }
.range { display: flex; align-items: center; margin: 32px 4px 0; gap: 24px; }
.swatch { width: 64px; height: 58px; border: 2px solid #000; }
.low { background: var(--g1); }
.high { background: var(--r1); }
.steps { position: relative; flex: 1; height: 66px; padding: 7px 8px 8px 7px; background: #fff; }
.steps::after { content: ""; position: absolute; left: 50%; top: 52px; width: 2px; height: 8px; margin-left: -1px; background: #000; }
.bar { display: flex; height: 50px; border: 2px solid #b0aa98; }
.bar i { flex: 1; }
.range-labels { display: flex; justify-content: space-between; padding: 0 94px 0 92px; margin-top: 17px; }
.options { padding: 29px 0 32px 4px; border-bottom: 2px solid #c4c4c4; box-shadow: 0 1px 0 #fff; }
.option { display: flex; align-items: center; height: 54px; }
.check { display: flex; align-items: center; gap: 9px; }
.stepped { width: 210px; }
.off { color: #b0b0b0; }
.check input { appearance: none; width: 28px; height: 28px; border-radius: 7px; background: #fff; border: 1px solid #d0d0d0; display: grid; place-items: center; }
.check input:checked { background: linear-gradient(#1a95ff, #007aff); border: 0; }
.check input:checked::after { content: ""; width: 9px; height: 16px; margin-top: -4px; border: solid #fff; border-width: 0 3px 3px 0; transform: rotate(40deg); }
.check input:disabled { background: #f2f2f2; border-color: #e0e0e0; }
.count { width: 56px; height: 36px; padding-left: 5px; background: #fff; border: 1px solid #d0d0d0; border-left: 2px solid #8ab4e8; border-bottom: 2px solid #aaa; }
.stepper { display: flex; flex-direction: column; width: 28px; height: 42px; margin: 0 20px 0 4px; border-radius: 12px; background: #fff; border: 1px solid #d8d8d8; box-shadow: 0 1px 1px rgba(0, 0, 0, .2); }
.stepper button { flex: 1; display: grid; place-items: center; }
.stepper button + button { border-top: 1px solid #d4d4d4; }
.btn { width: 140px; height: 52px; border: 2px solid #adadad; background: linear-gradient(#e2e2e2, #f6f6f6); color: #000; font-weight: 500; }
.btn:disabled { border-color: #ccc; color: #b4b4b4; background: linear-gradient(#e6e6e6, #f0f0f0); font-weight: 400; }
.btn.default { background: linear-gradient(#c0c0c0, #dadada); color: #fff; }
.btn.advanced { width: 198px; margin-left: auto; }
.actions { display: flex; gap: 28px; padding-top: 43px; }
.spring { flex: 1; }

/* step annotations */
.notes { position: absolute; inset: 0; pointer-events: none; color: #f00; font: 54px/54px Inter, sans-serif; }
.box, .digit { position: absolute; }
.box { border: 4px solid #f00; }
.b1 { left: 440px; top: 502px; width: 85px; height: 101px; }
.b2 { left: 482px; top: 652px; width: 285px; height: 83px; }
.b3 { left: 1048px; top: 618px; width: 807px; height: 75px; }
.b4 { left: 1026px; top: 858px; width: 413px; height: 151px; }
.b5 { left: 1692px; top: 1132px; width: 177px; height: 113px; }
.d1 { left: 377px; top: 532px; }
.d2 { left: 409px; top: 664px; }
.d3 { left: 1247px; top: 540px; }
.d4 { left: 1515px; top: 926px; }
.d5 { left: 1660px; top: 1101px; }
```
